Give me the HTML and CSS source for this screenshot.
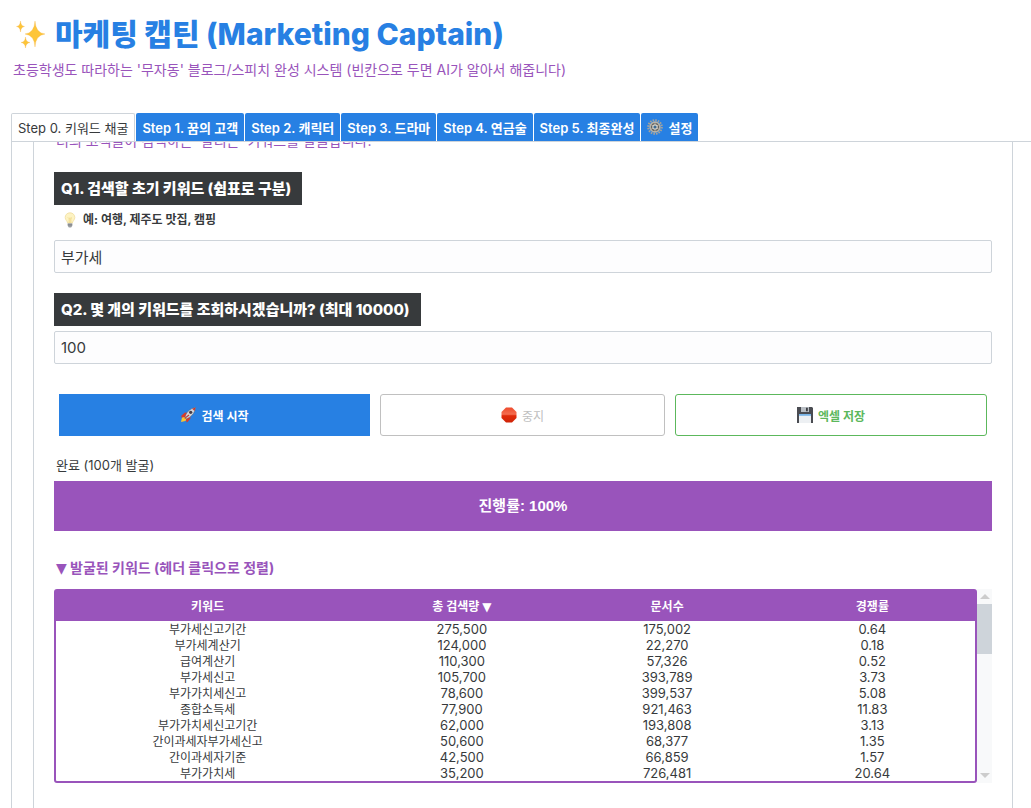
FILE: index.html
```html
<!DOCTYPE html>
<html lang="ko">
<head>
  <meta charset="UTF-8">
  <meta name="viewport" content="width=device-width, initial-scale=1.0">
  <title>마케팅 캡틴 (Marketing Captain)</title>
  <link rel="stylesheet" href="styles.css">
</head>
<body>
  <!-- Header -->
  <header class="header">
    <h1>
      <svg class="icon icon-large" viewBox="0 0 32 32" aria-hidden="true">
        <g fill="#fdc539" stroke="#f5b041" stroke-width="0.3">
          <path d="M20 3Q20.600 15 30 16Q20.600 17 20 29Q19.400 17 10 16Q19.400 15 20 3Z"/>
          <path d="M5.500 3Q5.800 8 9.500 8.500Q5.800 9 5.500 14Q5.200 9 1.500 8.500Q5.200 8 5.500 3Z"/>
          <path d="M10.500 19Q10.800 24 15 24.500Q10.800 25 10.500 30Q10.200 25 6 24.500Q10.200 24 10.500 19Z"/>
        </g>
      </svg>
      마케팅 캡틴 (Marketing Captain)
    </h1>
    <p>초등학생도 따라하는 '무자동' 블로그/스피치 완성 시스템 (빈칸으로 두면 AI가 알아서 해줍니다)</p>
  </header>

  <!-- Step tabs -->
  <nav class="tabs">
    <button type="button" class="tab active">Step 0. 키워드 채굴</button>
    <button type="button" class="tab">Step 1. 꿈의 고객</button>
    <button type="button" class="tab">Step 2. 캐릭터</button>
    <button type="button" class="tab">Step 3. 드라마</button>
    <button type="button" class="tab">Step 4. 연금술</button>
    <button type="button" class="tab">Step 5. 최종완성</button>
    <button type="button" class="tab">
      <svg class="icon" viewBox="0 0 16 16" aria-hidden="true">
        <circle cx="8" cy="8" r="6.800" fill="none" stroke="#a5a29b" stroke-width="2" stroke-dasharray="1.600 1.070"/>
        <circle cx="8" cy="8" r="4.900" fill="#66645f" stroke="#b5b2a9" stroke-width="1.600"/>
        <path d="M8 3v10M3.700 5.500l8.600 5M12.300 5.500l-8.600 5" stroke="#b9b6ae" stroke-width="0.800"/>
        <circle cx="8" cy="8" r="2.200" fill="#3b6a93" stroke="#d6d2c8" stroke-width="1.200"/>
      </svg>
      설정
    </button>
  </nav>

  <main class="panel">
    <div class="page">
      <p class="intro">너의 고객들이 검색하는 '팔리는' 키워드를 발굴합니다.</p>

      <div class="form-group">
        <label class="question" for="seed-keyword">Q1. 검색할 초기 키워드 (쉼표로 구분)</label>
        <p class="hint">
          <svg class="icon" viewBox="0 0 16 16" aria-hidden="true">
            <path d="M8 .8C5 .8 3.200 3 3.200 5.500c0 2.400 2 3.300 2.500 5.700h4.600c.5-2.400 2.500-3.300 2.500-5.700C12.800 3 11 .8 8 .8Z" fill="#fdf3c3" stroke="#f0dda0" stroke-width="0.800"/>
            <path d="M6 5.500l1.200 1.200L8 5.700l.8 1L10 5.500M7.200 7v4M8.800 7v4" fill="none" stroke="#e8c768" stroke-width="0.600"/>
            <path d="M5.700 11.300h4.600v2.200l-1.100 1.900H6.800l-1.100-1.900Z" fill="#a3a6aa"/>
            <path d="M5.700 12.500h4.600M5.900 13.800h4.200" stroke="#6f7479" stroke-width="0.500"/>
          </svg>
          예: 여행, 제주도 맛집, 캠핑
        </p>
        <input type="text" id="seed-keyword" value="부가세">
      </div>

      <div class="form-group">
        <label class="question" for="keyword-count">Q2. 몇 개의 키워드를 조회하시겠습니까? (최대 10000)</label>
        <input type="text" id="keyword-count" value="100">
      </div>

      <div class="actions">
        <button type="button" class="btn btn-start">
          <svg class="icon" viewBox="0 0 16 16" aria-hidden="true">
            <path d="M1 15l1-4.500 2.500-.8 2 2-1 2.300Z" fill="#fbc531"/>
            <path d="M1.500 8.500L5 5.500l3 .5-3 4-3.800.5ZM7.500 15l3-3.500-.5-3-4 3 .5 3.700Z" fill="#d93a2b"/>
            <path d="M5 11C5.500 6 9.500 1.500 15.500.5 15 6.500 10.500 10.500 6 12Z" fill="#cfd5db" stroke="#59616b" stroke-width="0.500"/>
            <path d="M12.200 1.700L15.500.5l-1 3.400Z" fill="#c83932"/>
            <circle cx="10.700" cy="5.300" r="1.600" fill="#463c48"/>
            <path d="M4.700 11.400L9 8" stroke="#c83932" stroke-width="1.200"/>
          </svg>
          검색 시작
        </button>
        <button type="button" class="btn btn-stop" disabled>
          <svg class="icon" viewBox="0 0 16 16" aria-hidden="true">
            <defs>
              <linearGradient id="stop-fill" x1="0" y1="0" x2="0" y2="1">
                <stop offset="0" stop-color="#ee4a2c"/>
                <stop offset="0.450" stop-color="#f46d50"/>
                <stop offset="0.550" stop-color="#e02a0a"/>
                <stop offset="1" stop-color="#cf2408"/>
              </linearGradient>
            </defs>
            <path d="M5 .5h6L15.500 5v6L11 15.500H5L.5 11V5Z" fill="url(#stop-fill)"/>
          </svg>
          중지
        </button>
        <button type="button" class="btn btn-save">
          <svg class="icon" viewBox="0 0 16 16" aria-hidden="true">
            <path d="M0 0h15l1 1v15H0Z" fill="#4a4c52"/>
            <path d="M4 0h8v5H4Z" fill="#b9bec4"/>
            <path d="M9 .8h1.800v3.400H9Z" fill="#3b3d42"/>
            <path d="M2 7h12v9H2Z" fill="#edf0f3"/>
            <path d="M2 7h12v1.800H2Z" fill="#79b4e6"/>
          </svg>
          엑셀 저장
        </button>
      </div>

      <p class="status">완료 (100개 발굴)</p>
      <div class="progress" role="progressbar" aria-valuenow="100" aria-valuemin="0" aria-valuemax="100">진행률: 100%</div>

      <!-- Keyword results -->
      <h2><span class="marker">▼</span> 발굴된 키워드 (헤더 클릭으로 정렬)</h2>
      <div class="results">
        <div class="table-frame">
          <table>
            <thead>
              <tr><th>키워드</th><th>총 검색량 <span class="marker">▼</span></th><th>문서수</th><th>경쟁률</th></tr>
            </thead>
            <tbody>
              <tr><td>부가세신고기간</td><td>275,500</td><td>175,002</td><td>0.64</td></tr>
              <tr><td>부가세계산기</td><td>124,000</td><td>22,270</td><td>0.18</td></tr>
              <tr><td>급여계산기</td><td>110,300</td><td>57,326</td><td>0.52</td></tr>
              <tr><td>부가세신고</td><td>105,700</td><td>393,789</td><td>3.73</td></tr>
              <tr><td>부가가치세신고</td><td>78,600</td><td>399,537</td><td>5.08</td></tr>
              <tr><td>종합소득세</td><td>77,900</td><td>921,463</td><td>11.83</td></tr>
              <tr><td>부가가치세신고기간</td><td>62,000</td><td>193,808</td><td>3.13</td></tr>
              <tr><td>간이과세자부가세신고</td><td>50,600</td><td>68,377</td><td>1.35</td></tr>
              <tr><td>간이과세자기준</td><td>42,500</td><td>66,859</td><td>1.57</td></tr>
              <tr><td>부가가치세</td><td>35,200</td><td>726,481</td><td>20.64</td></tr>
            </tbody>
          </table>
        </div>
        <div class="scrollbar" aria-hidden="true">
          <span class="arrow arrow-up"></span>
          <span class="thumb"></span>
          <span class="arrow arrow-down"></span>
        </div>
      </div>
    </div>
  </main>
</body>
</html>
```

FILE: styles.css
```css
:root {
  --primary: #2780e3;
  --purple: #9954bb;
  --green: #5cb85c;
  --dark: #373a3c;
  --border: #ced4da;
}

* {
  box-sizing: border-box;
}

body {
  margin: 0;
  height: 100vh;
  display: flex;
  flex-direction: column;
  overflow: hidden;
  background-color: #fff;
  color: var(--dark);
  font-family: Inter, "Noto Sans CJK KR", sans-serif;
  font-size: 12px;
}

h1, h2, p {
  margin: 0;
}

button, input {
  font-family: inherit;
}

.icon {
  width: 16px;
  height: 16px;
  flex: none;
}

.icon-large {
  width: 32px;
  height: 32px;
}

.marker {
  font-family: "DejaVu Sans", sans-serif;
}

/* Header */
.header {
  padding: 12px 12px 0;
  height: 113px;
}

.header h1 {
  display: flex;
  align-items: center;
  gap: 8px;
  padding-left: 3px;
  color: var(--primary);
  font-size: 30px;
  font-weight: 800;
  line-height: 44px;
}

.header p {
  padding-left: 1px;
  color: var(--purple);
  font-size: 14px;
  line-height: 28px;
}

/* Tabs */
.tabs {
  display: flex;
  gap: 1px;
  padding: 0 11px;
}

.tab {
  display: flex;
  align-items: center;
  gap: 5px;
  height: 28px;
  padding: 0 6px;
  border: 0;
  border-radius: 2px 2px 0 0;
  background-color: var(--primary);
  color: #fff;
  font-size: 13px;
  font-weight: 600;
  white-space: nowrap;
}

.tab.active {
  border: 1px solid var(--border);
  border-bottom: 0;
  background-color: #fff;
  color: var(--dark);
  font-weight: 400;
}

/* Panel with the scrolled page */
.panel {
  flex: 1;
  min-height: 0;
  margin-left: 11px;
  padding: 0 18px 0 21px;
  border: 1px solid var(--border);
  border-width: 1px 0 0 1px;
  overflow: hidden;
}

.page {
  display: flow-root;
  height: 100%;
  padding: 0 20px;
  border: 1px solid var(--border);
  border-width: 0 1px;
}

.intro {
  margin-top: -12px;
  padding-left: 2px;
  color: var(--purple);
  font-size: 14px;
  line-height: 22px;
}

.form-group {
  margin-top: 20px;
}

.question {
  display: table;
  padding: 0 11px 0 7px;
  background-color: var(--dark);
  color: #fff;
  font-size: 15px;
  font-weight: 800;
  line-height: 33px;
}

.hint {
  display: flex;
  align-items: center;
  gap: 5px;
  padding-left: 8px;
  font-weight: 700;
  line-height: 30px;
}

.form-group input {
  display: block;
  width: 100%;
  height: 33px;
  margin-top: 5px;
  padding: 0 6px;
  border: 1px solid var(--border);
  border-radius: 2px;
  background-color: #fdfdfe;
  color: var(--dark);
  font-size: 15px;
}

/* Buttons */
.actions {
  display: grid;
  grid-template-columns: 311fr 285fr 312fr;
  gap: 10px;
  margin: 30px 5px 0;
}

.btn {
  display: flex;
  align-items: center;
  justify-content: center;
  gap: 5px;
  height: 42px;
  border: 1px solid;
  border-radius: 3px;
  background-color: #fff;
  font-size: 12px;
  font-weight: 600;
}

.btn-start {
  border-radius: 0;
  border-color: var(--primary);
  background-color: var(--primary);
  color: #fff;
}

.btn-stop {
  border-color: #c0c0c0;
  color: #c0c0c0;
  font-weight: 400;
}

.btn-save {
  border-color: var(--green);
  color: var(--green);
}

/* Progress */
.status {
  margin-top: 18px;
  padding: 0 0 4px 2px;
  font-size: 13px;
  line-height: 23px;
}

.progress {
  background-color: var(--purple);
  color: #fff;
  font-family: "Liberation Sans", "Noto Sans CJK KR", sans-serif;
  font-size: 15px;
  font-weight: 700;
  line-height: 50px;
  text-align: center;
}

/* Results */
.page h2 {
  margin-top: 22px;
  padding-left: 2px;
  color: var(--purple);
  font-size: 14px;
  line-height: 30px;
}

.results {
  display: flex;
  margin-top: 6px;
}

.table-frame {
  flex: 1;
  border: 2px solid var(--purple);
  border-radius: 3px;
}

table {
  width: 100%;
  table-layout: fixed;
  border-collapse: collapse;
  text-align: center;
}

th, td {
  padding: 0;
}

th {
  height: 30px;
  padding-bottom: 2px;
  background-color: var(--purple);
  color: #fff;
  font-size: 12px;
}

th:first-child {
  width: 33%;
}

td {
  height: 16px;
  font-size: 13px;
  line-height: 16px;
  vertical-align: baseline;
}

td:first-child {
  font-size: 12px;
  line-height: 14px;
}

.scrollbar {
  display: flex;
  flex-direction: column;
  align-items: center;
  width: 15px;
  padding: 5px 0;
  background-color: #f8f9fa;
}

.thumb {
  width: 100%;
  height: 50px;
  margin: 5px 0 auto;
  background-color: var(--border);
}

.arrow {
  border: 5px solid transparent;
}

.arrow-up {
  border-top: 0;
  border-bottom-color: #ccc;
}

.arrow-down {
  border-bottom: 0;
  border-top-color: #ccc;
}
```
